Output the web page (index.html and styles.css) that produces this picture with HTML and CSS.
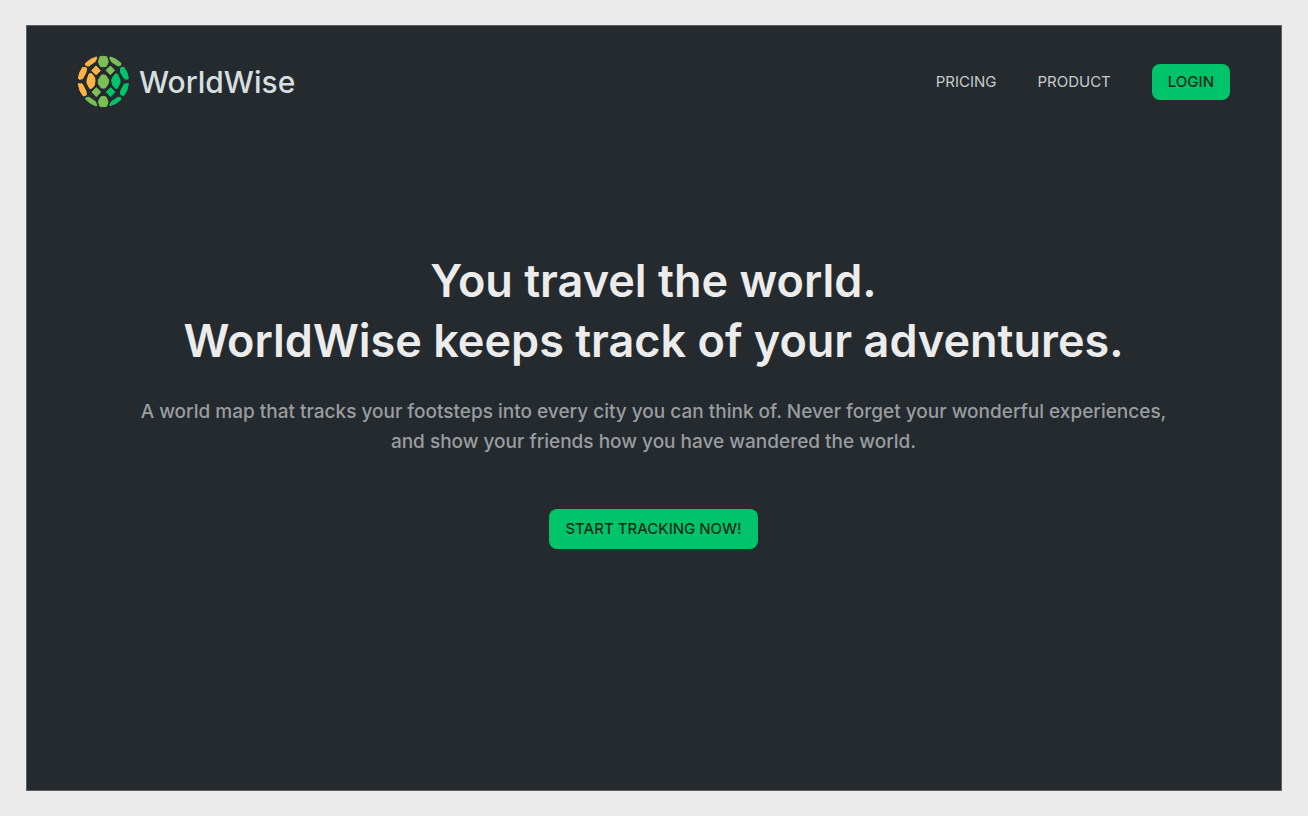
FILE: index.html
```html
<!DOCTYPE html>
<html lang="en">
<head>
  <meta charset="utf-8">
  <meta name="viewport" content="width=device-width, initial-scale=1">
  <title>WorldWise</title>
  <link rel="stylesheet" href="styles.css">
</head>
<body>
  <main class="homepage">
    <nav class="nav">
      <a class="logo" href="#">
        <svg class="logo-mark" viewBox="21 21 159 159" aria-hidden="true">
          <g class="amber">
            <path d="M47 46Q60 32 79 27L81 29L75 41L56 54L48 53Q44 51 47 46Z"/>
            <path d="M38 58L50 60L48 73L38 92L28 94L25 91Q27 73 38 58Z"/>
            <path d="M78 54L91 68L78 80L65 68Z"/>
            <path d="M60 76L66 78L74 89L75 99L73 112L65 121L59 121L51 106L51 96L57 79Z"/>
            <path d="M25 107L37 108L48 130L49 141L40 144Q27 129 25 107Z"/>
          </g>
          <g class="lime">
            <path d="M90 26Q100 24 110 26L115 41L109 55Q101 58 91 55L85 41Z"/>
            <path d="M121 27Q140 32 153 46L152 52L144 54L125 42L119 29Z"/>
            <path d="M121 54L134 67L121 80L108 67Z"/>
            <path d="M94 82Q100 79 107 82L116 96L115 106L107 119Q100 122 93 119L85 107L85 96Z"/>
            <path d="M79 119L92 132L79 146L66 132Z"/>
            <path d="M48 149L57 148L75 160L81 172L79 174Q60 168 47 154Z"/>
            <path d="M92 147Q100 143 108 147L114 161L110 175Q100 177 90 175L85 161Z"/>
          </g>
          <g class="green">
            <path d="M151 60L161 57Q173 72 175 91L172 94L163 92L152 74Z"/>
            <path d="M137 77L142 78L150 95L150 105L142 121L136 121L128 111L125 98L128 88Z"/>
            <path d="M122 119L135 132L122 146L109 132Z"/>
            <path d="M163 108L175 107Q173 129 161 143L152 140L152 129Z"/>
            <path d="M145 148L152 149L153 154Q140 168 121 173L119 171L125 160Z"/>
          </g>
        </svg>
        <span class="logo-name">WorldWise</span>
      </a>
      <ul class="nav-list">
        <li><a class="nav-link" href="#">Pricing</a></li>
        <li><a class="nav-link" href="#">Product</a></li>
        <li><a class="nav-link nav-cta" href="#">Login</a></li>
      </ul>
    </nav>
    <section class="hero">
      <h1 class="hero-title">You travel the world.<br>WorldWise keeps track of your adventures.</h1>
      <p class="hero-text">A world map that tracks your footsteps into every city you can think of. Never forget your wonderful experiences,<br>and show your friends how you have wandered the world.</p>
      <a class="cta" href="#">Start tracking now!</a>
    </section>
  </main>
</body>
</html>
```
FILE: styles.css
```css
* {
  box-sizing: border-box;
  margin: 0;
  padding: 0;
}

body {
  min-height: 100vh;
  padding: 25px 26px;
  display: flex;
  background: #ebebeb;
  font-family: Inter, "Liberation Sans", sans-serif;
}

a {
  color: inherit;
  text-decoration: none;
}

.homepage {
  flex: 1;
  padding: 29px 51px 29px 50px;
  background: #242a2e;
  border: 1px solid #5c6164;
}

.nav {
  display: flex;
  align-items: center;
  justify-content: space-between;
}

.logo {
  display: flex;
  align-items: center;
  gap: 9px;
  color: #d6dee0;
}

.logo-mark {
  width: 53px;
  height: 53px;
  stroke-width: 3;
  stroke-linejoin: round;
}

.amber { fill: #ffb545; stroke: #ffb545; }
.lime { fill: #7cbf55; stroke: #7cbf55; }
.green { fill: #00c46a; stroke: #00c46a; }

.logo-name {
  font-size: 30px;
  font-weight: 500;
  line-height: 40px;
}

.nav-list {
  display: flex;
  align-items: center;
  gap: 41px;
  list-style: none;
}

.nav-link {
  display: block;
  color: #c8cbcc;
  font-size: 15px;
  line-height: 20px;
  text-transform: uppercase;
}

.nav-cta,
.cta {
  border-radius: 8px;
  background: #00c46a;
  color: #0b2f1a;
  font-size: 15px;
  font-weight: 500;
  line-height: 20px;
  text-transform: uppercase;
}

.nav-cta {
  padding: 8px 16px;
}

.hero {
  display: flex;
  flex-direction: column;
  align-items: center;
  padding-top: 143px;
  text-align: center;
}

.hero-title {
  color: #ececec;
  font-size: 45px;
  font-weight: 600;
  line-height: 60px;
}

.hero-text {
  margin-top: 26px;
  color: #9a9da0;
  font-size: 19px;
  font-weight: 500;
  line-height: 30px;
}

.cta {
  margin-top: 52px;
  padding: 10px 16px;
}
```
